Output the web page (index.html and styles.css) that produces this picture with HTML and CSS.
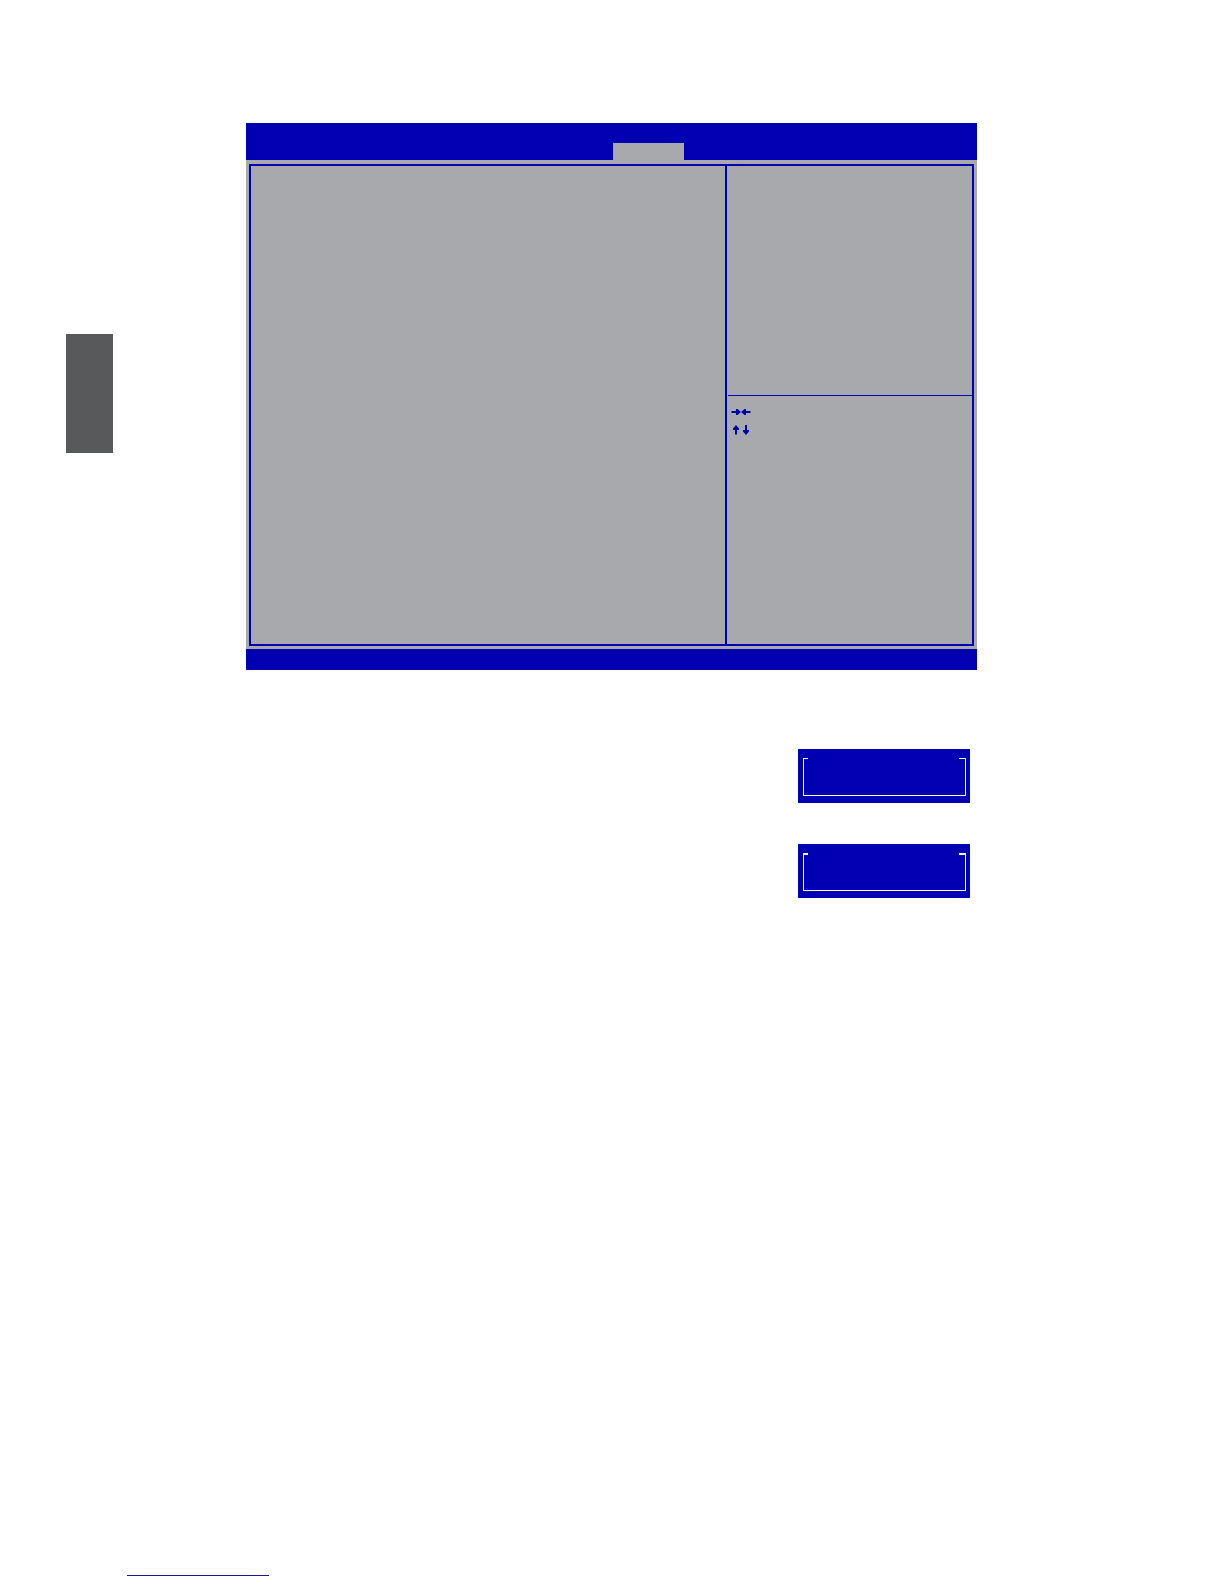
FILE: index.html
```html
<!DOCTYPE html>
<html lang="en">
<head>
  <meta charset="UTF-8" />
  <meta name="viewport" content="width=device-width, initial-scale=1.0"/>
  <title>Setup</title>
  <link rel="stylesheet" href="styles.css">
</head>
<body>

<div class="page">
  <main class="content">
    <aside class="side-tab"></aside>

    <div class="column">
      <section class="screen">
        <header class="menu-bar">
          <button type="button" class="menu-tab" aria-label="Current menu"></button>
        </header>

        <div class="screen-body">
          <div class="frame">
            <div class="options"></div>
            <div class="info">
              <div class="help"></div>
              <div class="keys">
                <!-- right / left -->
                <svg width="20" height="12" viewBox="0 0 20 12" aria-hidden="true">
                  <path d="M0.5 5H5V3H6.5L10 6L6.5 9H5V7H0.5Z"/>
                  <path d="M19.5 5H15V3H13.5L10 6L13.5 9H15V7H19.5Z"/>
                </svg>
                <!-- up / down -->
                <svg width="20" height="12" viewBox="0 0 20 12" aria-hidden="true">
                  <path d="M4 10.5V6H2V4.5L5 1L8 4.5V6H6V10.5Z"/>
                  <path d="M14 1V6H12V7.5L15 11L18 7.5V6H16V1Z"/>
                </svg>
              </div>
            </div>
          </div>
        </div>

        <footer class="status-bar"></footer>
      </section>

      <div class="dialogs">
        <div class="dialog">
          <div class="dialog-frame"></div>
        </div>
        <div class="dialog dialog-bold">
          <div class="dialog-frame"></div>
        </div>
      </div>
    </div>
  </main>

  <footer class="page-footer">
    <a href="#" class="footer-link" aria-label="Website"></a>
  </footer>
</div>

</body>
</html>
```
FILE: styles.css
```css
* {
  box-sizing: border-box;
}
body {
  margin: 0;
  background: #fff;
  font-family: "Liberation Sans", Arial, sans-serif;
}
.page {
  display: flex;
  flex-direction: column;
  min-height: 100vh;
}
.content {
  display: grid;
  grid-template-columns: 47px 1fr;
  column-gap: 133px;
  align-items: start;
  padding: 123px 247px 0 66px;
}
.side-tab {
  height: 119px;
  margin-top: 211px;
  background: #58595b;
}

/* setup screen */
.screen {
  background: #a7a9ac;
}
.menu-bar {
  display: flex;
  align-items: flex-end;
  height: 37px;
  padding-left: 367px;
  background: #0000b3;
}
.menu-tab {
  width: 71px;
  height: 17px;
  padding: 0;
  border: none;
  background: #a7a9ac;
}
.screen-body {
  padding: 4px 3px 3px;
}
.frame {
  display: grid;
  grid-template-columns: 1fr 245px;
  min-height: 482px;
  border: 2px solid #0000b3;
}
.options {
  border-right: 2px solid #0000b3;
}
.help {
  height: 230px;
  margin-left: 1px;
  border-bottom: 1px solid #0000b3;
}
.keys {
  display: flex;
  flex-direction: column;
  gap: 6px;
  padding: 10px 4px;
}
.keys svg {
  display: block;
  fill: #0000b3;
}
.status-bar {
  height: 21px;
  background: #0000b3;
}

/* small dialogs */
.dialogs {
  display: flex;
  flex-direction: column;
  align-items: flex-end;
  gap: 41px;
  padding: 79px 7px 0 0;
}
.dialog {
  width: 172px;
  height: 54px;
  padding: 9px 4px 7px 5px;
  background: #0000b3;
}
.dialog-frame {
  display: flex;
  justify-content: space-between;
  height: 100%;
  border: 1px solid #fff;
  border-top: none;
}
.dialog-frame::before,
.dialog-frame::after {
  content: "";
  width: 4px;
  height: 1px;
  background: #fff;
}
.dialog-frame::after {
  width: 6px;
}
.dialog-bold .dialog-frame::before,
.dialog-bold .dialog-frame::after {
  height: 2px;
}

.page-footer {
  margin-top: auto;
  padding: 0 127px 8px;
}
.footer-link {
  display: block;
  width: 142px;
  height: 16px;
  border-bottom: 1px solid #1a1a99;
}
```
